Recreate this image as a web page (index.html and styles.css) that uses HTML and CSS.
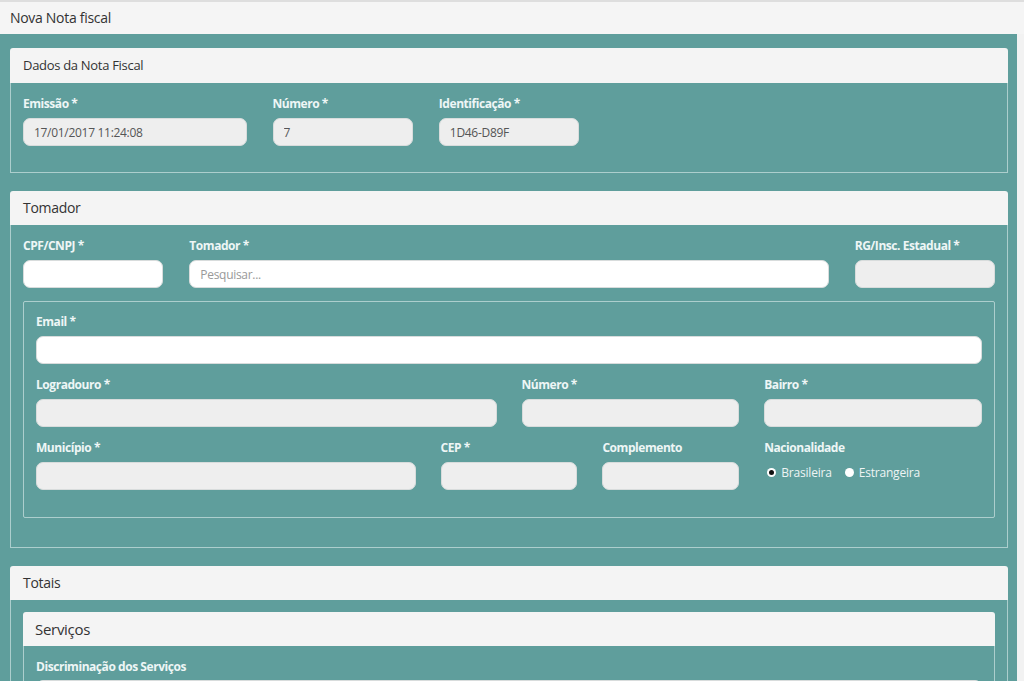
FILE: index.html
```html
<!DOCTYPE html>
<html lang="pt-BR">
<head>
<meta charset="utf-8">
<title>Nova Nota fiscal</title>
<link rel="stylesheet" href="styles.css">
</head>
<body>
<div class="topbar">Nova Nota fiscal</div>
<main class="content">
  <section class="panel">
    <div class="panel-heading small">Dados da Nota Fiscal</div>
    <div class="panel-body first">
      <div class="row outer">
        <div class="group c3"><label>Emissão *</label><input class="ctl" disabled value="17/01/2017 11:24:08"></div>
        <div class="group c2"><label>Número *</label><input class="ctl" disabled value="7"></div>
        <div class="group c2"><label>Identificação *</label><input class="ctl" disabled value="1D46-D89F"></div>
      </div>
    </div>
  </section>

  <section class="panel">
    <div class="panel-heading">Tomador</div>
    <div class="panel-body">
      <div class="row outer">
        <div class="group c2"><label>CPF/CNPJ *</label><input class="ctl white"></div>
        <div class="group c8"><label>Tomador *</label><input class="ctl white" placeholder="Pesquisar..."></div>
        <div class="group c2"><label>RG/Insc. Estadual *</label><input class="ctl" disabled></div>
      </div>
      <div class="box">
        <div class="row inner">
          <div class="group c12"><label>Email *</label><input class="ctl white"></div>
        </div>
        <div class="row inner">
          <div class="group c6"><label>Logradouro *</label><input class="ctl" disabled></div>
          <div class="group c3"><label>Número *</label><input class="ctl" disabled></div>
          <div class="group c3"><label>Bairro *</label><input class="ctl" disabled></div>
        </div>
        <div class="row inner">
          <div class="group c5"><label>Município *</label><input class="ctl" disabled></div>
          <div class="group c2"><label>CEP *</label><input class="ctl" disabled></div>
          <div class="group c2"><label>Complemento</label><input class="ctl" disabled></div>
          <div class="group c3"><label>Nacionalidade</label>
            <div class="radios">
              <span class="radio"><span class="dot checked"></span>Brasileira</span>
              <span class="radio"><span class="dot"></span>Estrangeira</span>
            </div>
          </div>
        </div>
      </div>
    </div>
  </section>

  <section class="panel">
    <div class="panel-heading">Totais</div>
    <div class="panel-body totals">
      <section class="panel sub">
        <div class="panel-heading">Serviços</div>
        <div class="panel-body">
          <div class="group"><label>Discriminação dos Serviços</label><textarea class="ctl white area"></textarea></div>
        </div>
      </section>
    </div>
  </section>
</main>
</body>
</html>
```

FILE: styles.css
```css
html, body {
  margin: 0;
  padding: 0;
}
body {
  background: #f2f2f2;
  font-family: "Open Sans", "Liberation Sans", sans-serif;
  color: #333;
  overflow: hidden;
  height: 681px;
}
.topbar {
  height: 32px;
  border-top: 2px solid #dedede;
  background: #f5f5f5;
  padding-left: 10px;
  font-size: 14px;
  line-height: 32px;
  letter-spacing: -0.3px;
  color: #333;
}
.content {
  margin-right: 7px;
  background: #5f9e9c;
  padding: 14px 9px 20px 10px;
  min-height: 700px;
}
.panel {
  margin-bottom: 18px;
}
.panel-heading {
  height: 34px;
  background: #f4f4f4;
  border-radius: 3px 3px 0 0;
  padding-left: 13px;
  font-size: 14px;
  line-height: 34px;
  letter-spacing: -0.3px;
  color: #333;
}
.panel-heading.small {
  font-size: 13px;
  line-height: 35px;
  height: 35px;
}
.panel-body {
  border: 1px solid rgba(235, 245, 245, 0.55);
  border-top: none;
  padding: 12px 12px 11px 12px;
}
.panel-body.totals {
  padding-top: 12px;
}
.row {
  display: grid;
  grid-template-columns: repeat(12, 1fr);
}
.row.outer { column-gap: 26px; }
.row.inner { column-gap: 25px; }
.c2 { grid-column: span 2; }
.c3 { grid-column: span 3; }
.c5 { grid-column: span 5; }
.c6 { grid-column: span 6; }
.c8 { grid-column: span 8; }
.c12 { grid-column: span 12; }
.group {
  margin-bottom: 15px;
}
.outer .group { margin-bottom: 13px; }
.first .outer .group { margin-bottom: 15px; }
.inner .group { margin-bottom: 12px; }
label {
  display: block;
  height: 18px;
  line-height: 18px;
  margin-bottom: 5px;
  font-size: 12px;
  font-weight: 700;
  letter-spacing: -0.45px;
  color: #eef6f6;
}
.ctl {
  display: block;
  box-sizing: border-box;
  width: 100%;
  height: 28px;
  margin: 0;
  padding: 0 10px;
  border: 1px solid #d8dcdc;
  border-radius: 7px;
  background: #eeeeee;
  font-family: "Open Sans", "Liberation Sans", sans-serif;
  font-size: 12px;
  letter-spacing: -0.3px;
  color: #555;
  -webkit-text-fill-color: #555;
  opacity: 1;
  outline: none;
}
.ctl.white { background: #ffffff; }
.ctl::placeholder {
  color: #999;
  -webkit-text-fill-color: #999;
}
.area {
  height: 40px;
  resize: none;
}
.box {
  border: 1px solid rgba(235, 245, 245, 0.55);
  border-radius: 2px;
  padding: 11px 12px 15px 12px;
  margin-bottom: 18px;
}
.radios {
  display: flex;
  align-items: center;
  gap: 10px;
  height: 22px;
  margin-top: -1px;
  font-size: 12px;
  letter-spacing: -0.2px;
  color: #eef4f4;
}
.radio {
  display: inline-flex;
  align-items: center;
}
.dot {
  width: 9px;
  height: 9px;
  border-radius: 50%;
  background: #fff;
  margin-right: 5px;
  margin-left: 3px;
  box-sizing: border-box;
  position: relative;
}
.dot.checked::after {
  content: "";
  position: absolute;
  left: 2px;
  top: 2px;
  width: 5px;
  height: 5px;
  border-radius: 50%;
  background: #111;
}
.sub {
  margin-bottom: 0;
}
.sub .panel-heading {
  height: 34px;
  line-height: 34px;
  padding-left: 12px;
  font-size: 15px;
}
.sub .panel-body {
  padding-top: 12px;
}
.sub .group label {
  margin-bottom: 4px;
}
```
